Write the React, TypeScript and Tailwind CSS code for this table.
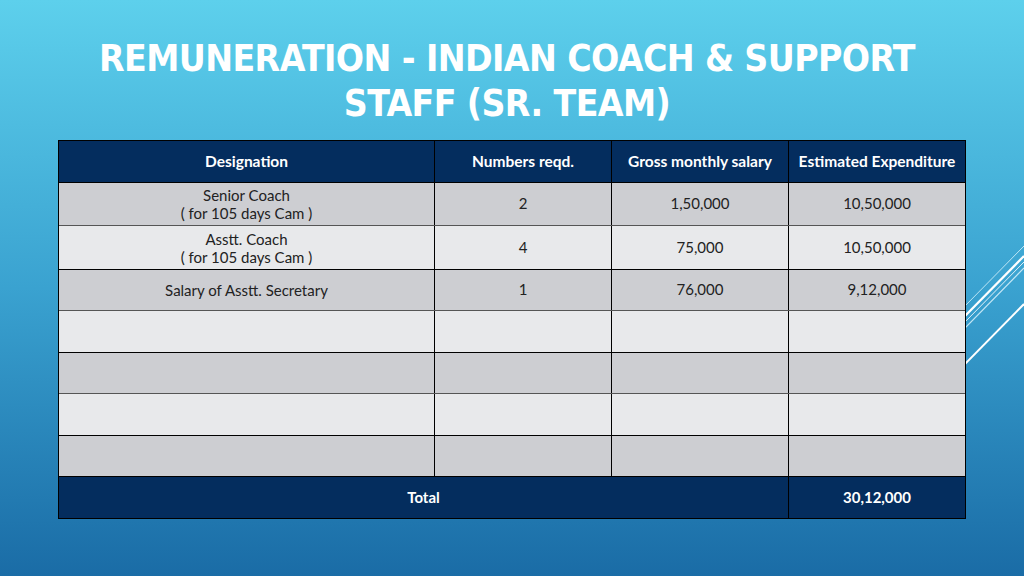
const rows = [
  { name: ["Senior Coach", "( for 105 days Cam )"], num: "2", gross: "1,50,000", est: "10,50,000", h: "h-[43px]" },
  { name: ["Asstt. Coach", "( for 105 days Cam )"], num: "4", gross: "75,000", est: "10,50,000", h: "h-[44px]" },
  { name: ["Salary of Asstt. Secretary"], num: "1", gross: "76,000", est: "9,12,000", h: "h-[41px]" },
  { name: [], num: "", gross: "", est: "", h: "h-[42px]" },
  { name: [], num: "", gross: "", est: "", h: "h-[41px]" },
  { name: [], num: "", gross: "", est: "", h: "h-[42px]" },
  { name: [], num: "", gross: "", est: "", h: "h-[41px]" },
];

function Lines() {
  return (
    <svg className="absolute right-0 top-[200px]" width="120" height="220" viewBox="0 0 120 220">
      <line x1="0" y1="168" x2="120" y2="46" stroke="#dff6fd" strokeWidth="1" opacity="0.8" />
      <line x1="0" y1="178" x2="120" y2="56" stroke="#ffffff" strokeWidth="2.2" />
      <line x1="0" y1="184" x2="120" y2="62" stroke="#ffffff" strokeWidth="1" opacity="0.85" />
      <line x1="0" y1="190" x2="120" y2="68" stroke="#e6f8ff" strokeWidth="1.2" opacity="0.8" />
      <line x1="0" y1="226" x2="120" y2="104" stroke="#ffffff" strokeWidth="2" />
    </svg>
  );
}

export default function App() {
  return (
    <div
      className="relative h-[576px] w-[1024px] overflow-hidden bg-gradient-to-b from-[#5dd0ec] via-[#3aa2d0] to-[#1a6ca6]"
      style={{ fontFamily: "Lato, 'Liberation Sans', sans-serif" }}
    >
      <Lines />
      <div className="relative flex flex-col items-center pt-[36px] pr-[10px]">
        <h1
          className="text-center text-[37px] font-bold uppercase leading-[45px] tracking-[-0.6px] text-white"
          style={{ fontFamily: "'DejaVu Sans Condensed', 'DejaVu Sans', Lato, sans-serif" }}
        >
          Remuneration - Indian Coach &amp; Support
          <br />
          Staff (Sr. Team)
        </h1>
      </div>

      <div className="relative ml-[58px] mt-[14px] w-[908px] border border-black text-[15px] text-[#222]">
        <div className="grid h-[41px] grid-cols-[376px_177px_177px_1fr] bg-[#042d5e] text-[15.5px] font-bold text-white">
          <div className="flex items-center justify-center border-r border-black">Designation</div>
          <div className="flex items-center justify-center border-r border-black">Numbers reqd.</div>
          <div className="flex items-center justify-center border-r border-black">Gross monthly salary</div>
          <div className="flex items-center justify-center">Estimated Expenditure</div>
        </div>
        {rows.map((r, i) => (
          <div
            key={i}
            className={`grid grid-cols-[376px_177px_177px_1fr] border-t ${
              i % 2 === 0 ? "border-black bg-[#cdced2]" : "border-[#555] bg-[#e8e9eb]"
            } ${r.h}`}
          >
            <div className="flex flex-col items-center justify-center border-r border-black leading-[18px]">
              {r.name.map((t) => (
                <span key={t}>{t}</span>
              ))}
            </div>
            <div className="flex items-center justify-center border-r border-black pb-[1px]">{r.num}</div>
            <div className="flex items-center justify-center border-r border-black pb-[1px]">{r.gross}</div>
            <div className="flex items-center justify-center pb-[1px]">{r.est}</div>
          </div>
        ))}
        <div className="grid h-[42px] grid-cols-[730px_1fr] border-t border-black bg-[#042d5e] text-[15px] font-bold text-white">
          <div className="flex items-center justify-center border-r border-black">Total</div>
          <div className="flex items-center justify-center">30,12,000</div>
        </div>
      </div>
    </div>
  );
}
